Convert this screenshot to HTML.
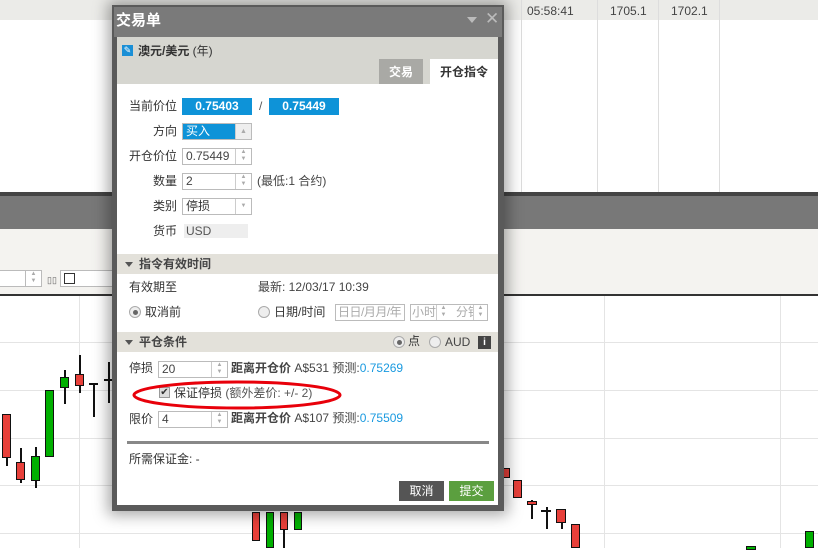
<!DOCTYPE html>
<html><head><meta charset="utf-8">
<style>
*{margin:0;padding:0;box-sizing:border-box}
body{width:818px;height:548px;overflow:hidden;position:relative;background:#fff;font-family:"Liberation Sans","Noto Sans CJK SC",sans-serif;font-size:12px;line-height:15px;color:#333;white-space:nowrap}
.a{position:absolute}
.c{position:absolute;border:1.5px solid #111}
.r{background:#e8403a}.g{background:#00b000}
.w{position:absolute;width:1.5px;background:#111}
.inp{position:absolute;border:1px solid #bbb;background:#fff;height:17px;font-size:12px;line-height:15px;padding-left:3px;color:#444;overflow:hidden}
.sp{position:absolute;right:0;top:0;width:16px;height:15px;border-left:1px solid #ccc;color:#aaa;font-size:6px;line-height:7px;text-align:center}
.lbl{position:absolute;text-align:right;font-size:12px;color:#333}
.sec{position:absolute;left:117px;width:381px;height:20px;background:#e3e1da;font-weight:bold;font-size:12px;line-height:20px;padding-left:22px;color:#444}
.sec:before{content:"";position:absolute;left:8px;top:8px;border:4px solid transparent;border-top:5px solid #555}
.rad{position:absolute;width:12px;height:12px;border-radius:50%;border:1px solid #aaa;background:#eee}
</style></head><body>
<div class="a" style="left:0;top:0;width:818px;height:20px;background:#ebebe8"></div>
<div class="a" style="left:521px;top:0;width:1px;height:192px;background:#ddd"></div>
<div class="a" style="left:597px;top:0;width:1px;height:192px;background:#ddd"></div>
<div class="a" style="left:658px;top:0;width:1px;height:192px;background:#ddd"></div>
<div class="a" style="left:719px;top:0;width:1px;height:192px;background:#ddd"></div>
<div class="a" style="left:527px;top:4px;color:#444">05:58:41</div>
<div class="a" style="left:610px;top:4px;color:#444">1705.1</div>
<div class="a" style="left:671px;top:4px;color:#444">1702.1</div>
<div class="a" style="left:0;top:192px;width:818px;height:4px;background:#444"></div>
<div class="a" style="left:0;top:196px;width:818px;height:33px;background:#787878"></div>
<div class="a" style="left:0;top:229px;width:818px;height:65px;background:#f4f3f0"></div>
<div class="a" style="left:0;top:294px;width:818px;height:1.5px;background:#333"></div>
<div class="a" style="left:-2px;top:270px;width:44px;height:17px;border:1px solid #bbb;background:#fff"></div>
<div class="a" style="left:25px;top:270px;width:17px;height:17px;border:1px solid #bbb;font-size:6px;color:#aaa;text-align:center;line-height:7px">▲<br>▼</div>
<div class="a" style="left:47px;top:273px;font-size:9px;color:#666">▯▯</div>
<div class="a" style="left:60px;top:270px;width:60px;height:17px;border:1px solid #bbb;background:#fff"></div>
<div class="a" style="left:64px;top:273px;width:11px;height:11px;border:1.5px solid #333"></div>
<div class="a" style="left:0;top:342px;width:818px;height:1px;background:#e4e4e4"></div>
<div class="a" style="left:0;top:390px;width:818px;height:1px;background:#e4e4e4"></div>
<div class="a" style="left:0;top:438px;width:818px;height:1px;background:#e4e4e4"></div>
<div class="a" style="left:0;top:485px;width:818px;height:1px;background:#e4e4e4"></div>
<div class="a" style="left:0;top:533px;width:818px;height:1px;background:#e4e4e4"></div>
<div class="a" style="left:79px;top:296px;width:1px;height:252px;background:#e4e4e4"></div>
<div class="a" style="left:604px;top:296px;width:1px;height:252px;background:#e4e4e4"></div>
<div class="a" style="left:780px;top:296px;width:1px;height:252px;background:#e4e4e4"></div>
<div class="w" style="left:6px;top:455px;height:11px"></div><div class="c r" style="left:2px;top:414px;width:9px;height:44px"></div>
<div class="w" style="left:20px;top:448px;height:35px"></div><div class="c r" style="left:16px;top:462px;width:9px;height:18px"></div>
<div class="w" style="left:35px;top:447px;height:41px"></div><div class="c g" style="left:31px;top:456px;width:9px;height:25px"></div>
<div class="c g" style="left:45px;top:390px;width:9px;height:67px"></div>
<div class="w" style="left:64px;top:370px;height:34px"></div><div class="c g" style="left:60px;top:377px;width:9px;height:11px"></div>
<div class="w" style="left:79px;top:355px;height:38px"></div><div class="c r" style="left:75px;top:374px;width:9px;height:12px"></div>
<div class="w" style="left:93px;top:384px;height:33px"></div><div class="a" style="left:89px;top:383px;width:9px;height:2px;background:#111"></div>
<div class="w" style="left:108px;top:362px;height:41px"></div><div class="a" style="left:104px;top:379px;width:8px;height:2px;background:#111"></div>
<div class="c r" style="left:252px;top:512px;width:8px;height:29px"></div>
<div class="c g" style="left:266px;top:512px;width:8px;height:36px"></div>
<div class="w" style="left:283px;top:512px;height:36px"></div><div class="c r" style="left:280px;top:512px;width:8px;height:18px"></div>
<div class="c g" style="left:294px;top:512px;width:8px;height:18px"></div>
<div class="c r" style="left:503px;top:468px;width:7px;height:10px"></div>
<div class="c r" style="left:513px;top:480px;width:9px;height:18px"></div>
<div class="w" style="left:531px;top:500px;height:19px"></div><div class="c r" style="left:527px;top:501px;width:10px;height:4px"></div>
<div class="w" style="left:546px;top:507px;height:22px"></div><div class="a" style="left:541px;top:510px;width:10px;height:1.5px;background:#111"></div>
<div class="w" style="left:561px;top:520px;height:9px"></div><div class="c r" style="left:556px;top:509px;width:10px;height:14px"></div>
<div class="c r" style="left:571px;top:524px;width:9px;height:24px"></div>
<div class="c g" style="left:746px;top:546px;width:10px;height:4px"></div>
<div class="c g" style="left:805px;top:531px;width:9px;height:17px"></div>
<div class="a" style="left:112px;top:5px;width:392px;height:506px;box-shadow:0 0 14px 4px rgba(0,0,0,0.35)"></div>
<div class="a" style="left:112px;top:5px;width:392px;height:506px;background:#5a5a5a"></div>
<div class="a" style="left:114px;top:7px;width:388px;height:30px;background:#7a7a7a"></div>
<div class="a" style="left:116px;top:12px;color:#fff;font-weight:bold;font-size:15px;line-height:18px">交易单</div>
<div class="a" style="left:467px;top:17px;border:5px solid transparent;border-top:6px solid #bbb"></div>
<div class="a" style="left:485px;top:9px;color:#bbb;font-size:17px;line-height:20px">✕</div>
<div class="a" style="left:117px;top:37px;width:381px;height:468px;background:#fff"></div>
<div class="a" style="left:117px;top:37px;width:381px;height:47px;background:#d6d6d0"></div>
<div class="a" style="left:122px;top:45px;width:11px;height:11px;background:#1a8fd6;color:#fff;font-size:9px;line-height:11px;text-align:center">✎</div>
<div class="a" style="left:138px;top:44px;font-size:12px;color:#333"><b>澳元/美元</b> (年)</div>
<div class="a" style="left:379px;top:59px;width:44px;height:25px;background:#a9a9a5;color:#fff;font-weight:bold;text-align:center;line-height:26px">交易</div>
<div class="a" style="left:430px;top:59px;width:68px;height:25px;background:#fff;color:#333;font-weight:bold;text-align:center;line-height:26px">开仓指令</div>
<div class="lbl" style="left:117px;width:60px;top:99px">当前价位</div>
<div class="a" style="left:182px;top:98px;width:70px;height:17px;background:#0e93d8;color:#fff;font-weight:bold;text-align:center;line-height:17px">0.75403</div>
<div class="a" style="left:259px;top:99px;color:#555">/</div>
<div class="a" style="left:269px;top:98px;width:70px;height:17px;background:#0e93d8;color:#fff;font-weight:bold;text-align:center;line-height:17px">0.75449</div>
<div class="lbl" style="left:117px;width:60px;top:124px">方向</div>
<div class="inp" style="left:182px;top:123px;width:70px;background:#0e93d8;color:#fff;border-color:#bbb">买入<div class="sp" style="background:#eee;font-size:7px;line-height:15px">▲</div></div>
<div class="lbl" style="left:117px;width:60px;top:149px">开仓价位</div>
<div class="inp" style="left:182px;top:148px;width:70px">0.75449<div class="sp">▲<br>▼</div></div>
<div class="lbl" style="left:117px;width:60px;top:174px">数量</div>
<div class="inp" style="left:182px;top:173px;width:70px">2<div class="sp">▲<br>▼</div></div>
<div class="a" style="left:257px;top:174px;color:#444">(最低:1 合约)</div>
<div class="lbl" style="left:117px;width:60px;top:199px">类别</div>
<div class="inp" style="left:182px;top:198px;width:70px;color:#333">停损<div class="sp" style="line-height:15px">▼</div></div>
<div class="lbl" style="left:117px;width:60px;top:224px">货币</div>
<div class="a" style="left:184px;top:224px;width:64px;height:14px;background:#eee;color:#555;padding-left:2px;line-height:14px">USD</div>
<div class="sec" style="top:254px">指令有效时间</div>
<div class="a" style="left:129px;top:280px">有效期至</div>
<div class="a" style="left:258px;top:280px;color:#444">最新: 12/03/17 10:39</div>
<div class="rad" style="left:129px;top:306px"><div class="a" style="left:2.5px;top:2.5px;width:5px;height:5px;border-radius:50%;background:#666"></div></div>
<div class="a" style="left:145px;top:305px">取消前</div>
<div class="rad" style="left:258px;top:306px"></div>
<div class="a" style="left:274px;top:305px">日期/时间</div>
<div class="inp" style="left:335px;top:304px;width:70px;color:#aaa;padding-left:2px;letter-spacing:-0.5px">日日/月月/年</div>
<div class="inp" style="left:410px;top:304px;width:78px;color:#aaa;padding-left:1px">小时 &nbsp;&nbsp;&nbsp;&nbsp;&nbsp;分钟</div>
<div class="a" style="left:436px;top:305px;width:14px;height:15px;border-left:1px solid #ccc;font-size:6px;color:#aaa;text-align:center;line-height:7px;background:#fff">▲<br>▼</div>
<div class="a" style="left:473px;top:305px;width:14px;height:15px;border-left:1px solid #ccc;font-size:6px;color:#aaa;text-align:center;line-height:7px;background:#fff">▲<br>▼</div>
<div class="sec" style="top:332px">平仓条件</div>
<div class="rad" style="left:393px;top:336px"><div class="a" style="left:2.5px;top:2.5px;width:5px;height:5px;border-radius:50%;background:#666"></div></div>
<div class="a" style="left:408px;top:334px">点</div>
<div class="rad" style="left:429px;top:336px"></div>
<div class="a" style="left:445px;top:335px;color:#444">AUD</div>
<div class="a" style="left:478px;top:336px;width:13px;height:13px;background:#444;color:#fff;font-size:10px;font-weight:bold;text-align:center;line-height:13px">i</div>
<div class="a" style="left:129px;top:361px">停损</div>
<div class="inp" style="left:158px;top:361px;width:70px">20<div class="sp">▲<br>▼</div></div>
<div class="a" style="left:231px;top:361px;color:#444"><b>距离开仓价</b> A$531 预测:<span style="color:#1a9ae0">0.75269</span></div>
<div class="a" style="left:159px;top:387px;width:11px;height:11px;border:1px solid #999;background:#ddd;font-size:10px;line-height:10px;text-align:center;color:#333">✔</div>
<div class="a" style="left:174px;top:386px;color:#333">保证停损 <span style="color:#555">(额外差价: +/- 2)</span></div>
<div class="a" style="left:129px;top:412px">限价</div>
<div class="inp" style="left:158px;top:411px;width:70px">4<div class="sp">▲<br>▼</div></div>
<div class="a" style="left:231px;top:411px;color:#444"><b>距离开仓价</b> A$107 预测:<span style="color:#1a9ae0">0.75509</span></div>
<div class="a" style="left:127px;top:441px;width:362px;height:3px;background:#888"></div>
<div class="a" style="left:129px;top:452px">所需保证金: -</div>
<div class="a" style="left:399px;top:481px;width:45px;height:20px;background:#555;color:#fff;text-align:center;line-height:20px">取消</div>
<div class="a" style="left:449px;top:481px;width:45px;height:20px;background:#5b9f3f;color:#fff;text-align:center;line-height:20px">提交</div>
<svg class="a" style="left:0;top:0" width="818" height="548"><ellipse cx="237" cy="395" rx="103" ry="13" fill="none" stroke="#e8000a" stroke-width="3"/></svg>
</body></html>
